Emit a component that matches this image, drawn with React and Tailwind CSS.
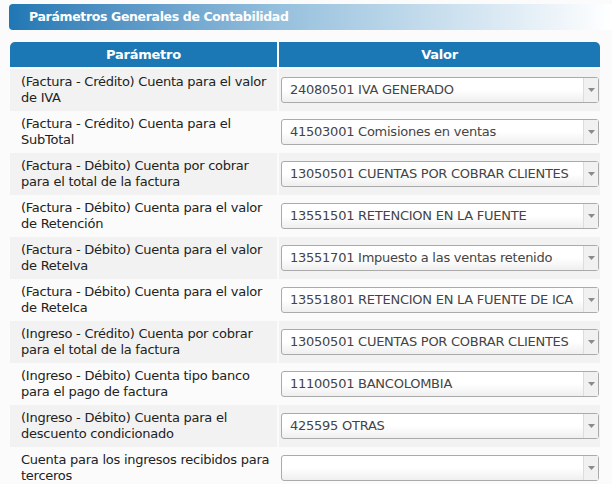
import React from 'react';

const rows = [
  { label: ['(Factura - Crédito) Cuenta para el valor', 'de IVA'], value: '24080501 IVA GENERADO' },
  { label: ['(Factura - Crédito) Cuenta para el', 'SubTotal'], value: '41503001 Comisiones en ventas' },
  { label: ['(Factura - Débito) Cuenta por cobrar', 'para el total de la factura'], value: '13050501 CUENTAS POR COBRAR CLIENTES' },
  { label: ['(Factura - Débito) Cuenta para el valor', 'de Retención'], value: '13551501 RETENCION EN LA FUENTE' },
  { label: ['(Factura - Débito) Cuenta para el valor', 'de ReteIva'], value: '13551701 Impuesto a las ventas retenido' },
  { label: ['(Factura - Débito) Cuenta para el valor', 'de ReteIca'], value: '13551801 RETENCION EN LA FUENTE DE ICA' },
  { label: ['(Ingreso - Crédito) Cuenta por cobrar', 'para el total de la factura'], value: '13050501 CUENTAS POR COBRAR CLIENTES' },
  { label: ['(Ingreso - Débito) Cuenta tipo banco', 'para el pago de factura'], value: '11100501 BANCOLOMBIA' },
  { label: ['(Ingreso - Débito) Cuenta para el', 'descuento condicionado'], value: '425595 OTRAS' },
  { label: ['Cuenta para los ingresos recibidos para', 'terceros'], value: '' },
];

const Select = ({ value }) => (
  <div className="flex h-[26px] w-full items-stretch rounded-[3px] border border-[#aaaaaa] bg-gradient-to-b from-white via-white to-[#efefef]">
    <div className="flex flex-1 items-center overflow-hidden whitespace-nowrap pl-[8px] text-[#444444]">{value}</div>
    <div className="flex w-[15px] items-center justify-center border-l border-[#dddddd] bg-[#f1f1f1]">
      <svg width="7" height="4" viewBox="0 0 7 4">
        <polygon points="0,0 7,0 3.5,4" fill="#8a8a8a" />
      </svg>
    </div>
  </div>
);

const App = () => {
  return (
    <div className="min-h-screen bg-[#fbfbfb] pt-[4px] font-['DejaVu_Sans',sans-serif] text-[13px] tracking-[-0.25px]">
      <div className="ml-[9px] flex h-[26px] items-center rounded-l-[4px] bg-gradient-to-r from-[#1f77b4] via-[#96c0dd] via-45% to-white pl-[20px]">
        <h1 className="text-[12.5px] font-bold tracking-[-0.35px] text-white">Parámetros Generales de Contabilidad</h1>
      </div>

      <div className="ml-[10px] mt-[12px] grid w-[590px] grid-cols-[267px_321px] gap-x-[2px]">
        <div className="flex h-[25px] items-center justify-center rounded-tl-[5px] bg-[#1c78b4] font-bold text-white">Parámetro</div>
        <div className="flex h-[25px] items-center justify-center rounded-tr-[5px] bg-[#1c78b4] font-bold text-white">Valor</div>
        <div className="col-span-2 h-[2px]" />
        {rows.map((row, i) => {
          const bg = i % 2 === 0 ? 'bg-[#f2f2f2]' : 'bg-transparent';
          return (
            <React.Fragment key={i}>
              <div className={`flex h-[42px] items-center pl-[11px] leading-[16px] text-[#222222] ${bg}`}>
                <span>
                  {row.label[0]}
                  <br />
                  {row.label[1]}
                </span>
              </div>
              <div className={`flex h-[42px] items-center pl-[2px] pr-[1px] ${bg}`}>
                <Select value={row.value} />
              </div>
            </React.Fragment>
          );
        })}
      </div>
    </div>
  );
};

export default App;
